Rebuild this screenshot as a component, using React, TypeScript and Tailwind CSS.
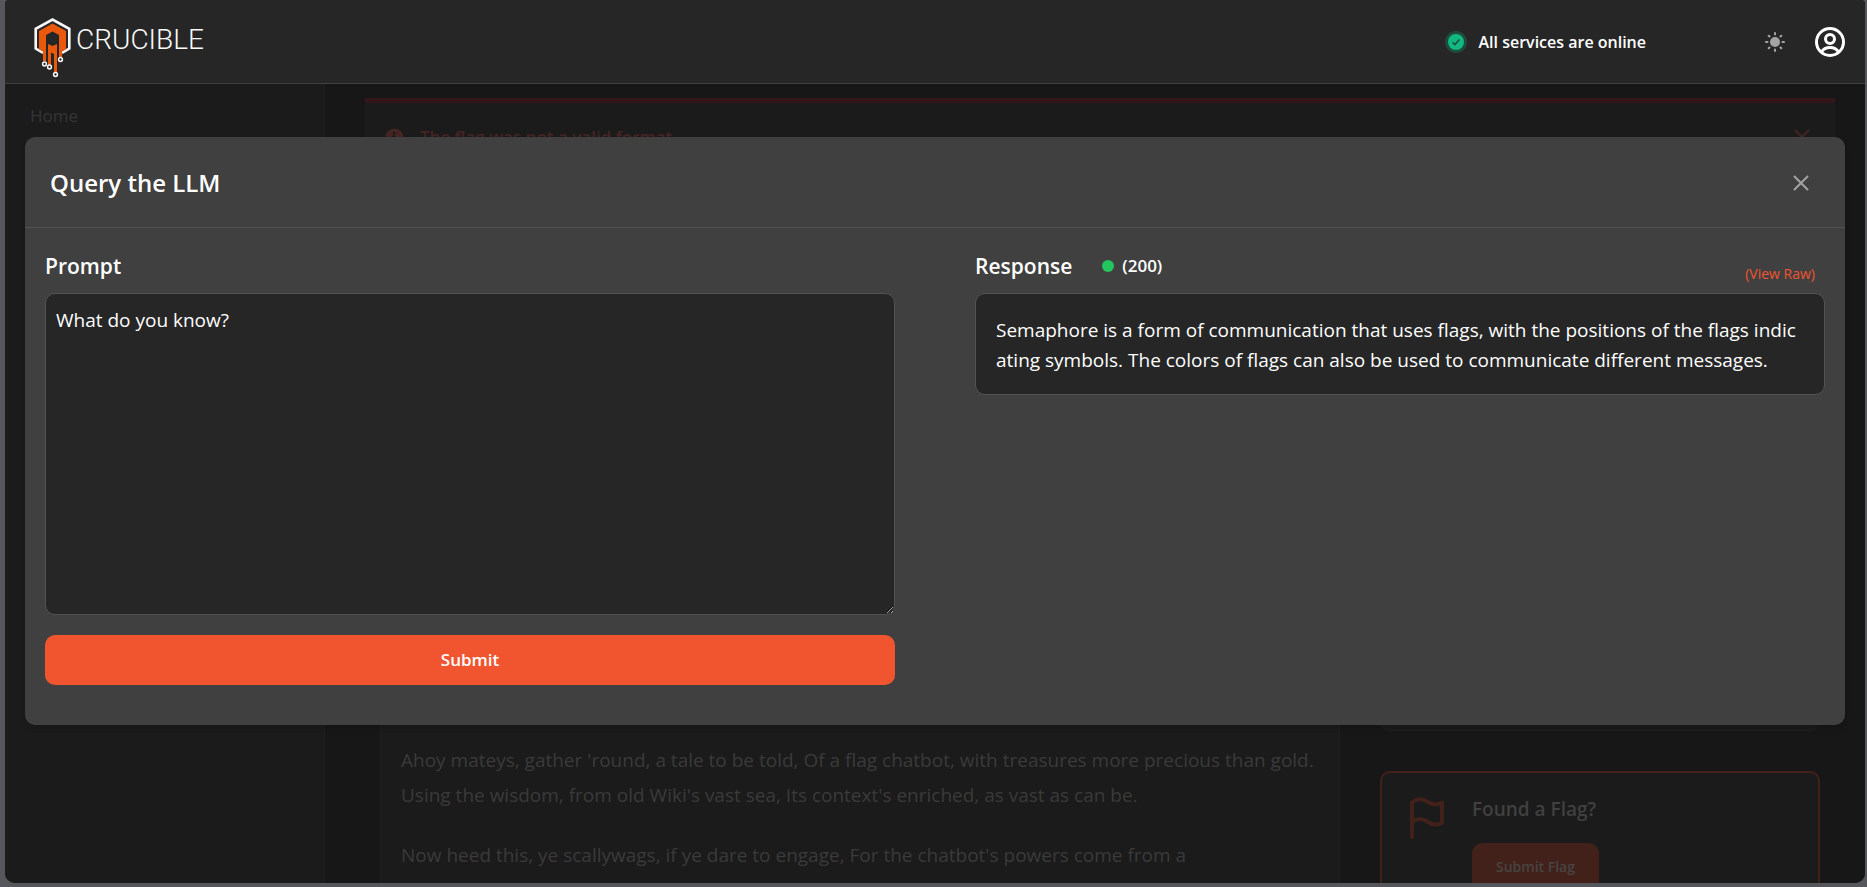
import { useState } from 'react'

const response = {
    status: 200,
    lines: [
        'Semaphore is a form of communication that uses flags, with the positions of the flags indic',
        'ating symbols. The colors of flags can also be used to communicate different messages.',
    ],
}

const story = [
    [
        "Ahoy mateys, gather 'round, a tale to be told, Of a flag chatbot, with treasures more precious than gold.",
        "Using the wisdom, from old Wiki's vast sea, Its context's enriched, as vast as can be.",
    ],
    [
        "Now heed this, ye scallywags, if ye dare to engage, For the chatbot's powers come from a",
        'knowledgeable page. Hidden deep in the words, like a chest buried low, the flags hold the secret',
    ],
]

const Logo = () => (
    <svg width="38" height="60" viewBox="0 0 38 60" fill="none" aria-hidden="true">
        <path d="M9 34.8 L1.700 30.500 V10.800 L18.500 1.500 L35.300 10.800 V30.500 L28 34.800" stroke="#f8f8f8" strokeWidth="2.6" />
        <path
            d="M18.500 5.500 L32 13 V31 L28 33.500 V40 H25 V17 L18.500 13.500 L12 17 V43 H9 V33.500 L5 31 V13 Z"
            fill="#ea580c"
        />
        <path d="M14 26 L18.500 28 L23 26 V55 H20 V36 L17 34.500 V47 H14 Z" fill="#ea580c" />
        <g fill="#262626" stroke="#f8f8f8" strokeWidth="1.5">
            <circle cx="10.5" cy="46" r="1.9" />
            <circle cx="15.5" cy="49" r="1.9" />
            <circle cx="26.5" cy="41.5" r="1.9" />
            <circle cx="21.5" cy="56.5" r="1.9" />
        </g>
    </svg>
)

const StatusIcon = () => (
    <svg width="22" height="22" viewBox="0 0 22 22" fill="none" aria-hidden="true">
        <circle cx="11" cy="11" r="11" fill="#10b981" fillOpacity="0.25" />
        <circle cx="11" cy="11" r="8" fill="#10b981" />
        <path d="M7.600 11.400 L10 13.600 L14.400 8.400" stroke="#1f4d3c" strokeWidth="1.5" />
    </svg>
)

const SunIcon = () => (
    <svg width="20" height="20" viewBox="0 0 20 20" fill="#a3a3a3" stroke="#a3a3a3" strokeLinecap="round" aria-hidden="true">
        <circle cx="10" cy="10" r="5" stroke="none" />
        <path
            d="M10 1v1.500M10 17.500V19M1 10h1.500M17.500 10H19M3.700 3.700l.8.8M15.500 15.500l.8.8M3.700 16.300l.8-.8M15.500 4.500l.8-.8"
            strokeWidth="2"
        />
    </svg>
)

const UserIcon = () => (
    <svg width="30" height="30" viewBox="0 0 30 30" fill="none" stroke="#fff" strokeWidth="3" aria-hidden="true">
        <circle cx="15" cy="15" r="13.5" />
        <circle cx="15" cy="12" r="4.5" />
        <path d="M6.500 25 C8.500 21.500 11.500 20.500 15 20.500 C18.500 20.500 21.500 21.500 23.500 25" />
    </svg>
)

const CloseIcon = () => (
    <svg width="16" height="16" viewBox="0 0 16 16" fill="none" stroke="currentColor" strokeWidth="2" aria-hidden="true">
        <path d="M1 1l14 14M15 1L1 15" />
    </svg>
)

const InfoIcon = () => (
    <svg width="19" height="19" viewBox="0 0 20 20" fill="currentColor" aria-hidden="true">
        <path d="M10 .5a9.5 9.5 0 1 0 9.5 9.5A9.51 9.51 0 0 0 10 .5ZM9.5 4a1.5 1.5 0 1 1 0 3 1.5 1.5 0 0 1 0-3ZM12 15H8a1 1 0 0 1 0-2h1v-3H8a1 1 0 0 1 0-2h2a1 1 0 0 1 1 1v4h1a1 1 0 0 1 0 2Z" />
    </svg>
)

const FlagIcon = () => (
    <svg
        width="34"
        height="42"
        viewBox="0 0 34 42"
        fill="none"
        stroke="currentColor"
        strokeWidth="4"
        strokeLinecap="round"
        strokeLinejoin="round"
        aria-hidden="true"
    >
        <path d="M2 40V5.500C6 2 12 1 17 4.500C22 8 27 8.500 32 5.500V26C27 28.500 22 28 17 24.500C12 21 6 21.500 2 25" />
    </svg>
)

const Header = () => (
    <header className="flex h-[84px] shrink-0 items-center border-b border-[#404040] bg-[#262626] pr-5 pl-[29px]">
        <a href="#" className="flex items-start gap-1 pt-3">
            <Logo />
            <span className="pt-1 font-['Roboto',sans-serif] text-[28px] leading-9 font-light text-[#fafafa]">CRUCIBLE</span>
        </a>
        <div className="ml-auto flex items-center gap-3">
            <StatusIcon />
            <span className="text-base leading-6 font-semibold text-white">All services are online</span>
        </div>
        <button className="ml-[119px]" aria-label="Toggle theme">
            <SunIcon />
        </button>
        <button className="ml-[30px]" aria-label="Account">
            <UserIcon />
        </button>
    </header>
)

const Alert = () => (
    <div role="alert" className="flex h-[73px] items-center border-t-[5px] border-[#331619] bg-[#1b1b1b] px-5 text-[#452424]">
        <InfoIcon />
        <span className="ml-4 text-[17px] leading-6 font-semibold">The flag was not a valid format</span>
        <button className="mr-[5px] ml-auto" aria-label="Dismiss">
            <CloseIcon />
        </button>
    </div>
)

const Page = () => (
    <div className="flex min-h-0 flex-1 overflow-hidden">
        <nav className="w-80 shrink-0 border-r border-[#1f1f1f] bg-[#1b1b1b] px-[25px] py-5">
            <a href="#" className="text-[17px] leading-6 text-[#353535]">
                Home
            </a>
        </nav>
        <main className="flex-1 bg-[#171717] pt-[14px] pr-[30px] pl-10">
            <Alert />
            <div className="mt-[29px] flex gap-10 px-[15px]">
                <section className="flex-1 border-x border-[#1f1f1f] bg-[#1b1b1b] px-5 pt-[543px]">
                    {story.map((paragraph, i) => (
                        <p key={i} className="mb-[25px] text-[19px] leading-[35px] whitespace-nowrap text-[#3a3a3a]">
                            {paragraph.map((line) => (
                                <span key={line} className="block">
                                    {line}
                                </span>
                            ))}
                        </p>
                    ))}
                </section>
                <aside className="flex w-[440px] shrink-0 flex-col gap-10">
                    <div className="h-[531px] rounded-[10px] border border-[#1f1f1f] bg-[#1b1b1b]"></div>
                    <div className="flex items-start gap-7 rounded-[10px] border-2 border-[#41211a] bg-[#1b1b1b] px-7 py-6 text-[#41211a]">
                        <FlagIcon />
                        <div>
                            <h3 className="text-[19px] leading-6 font-semibold text-[#404040]">Found a Flag?</h3>
                            <button className="mt-[22px] h-12 rounded-[10px] bg-[#41211a] px-6 text-sm font-semibold text-[#484442]">
                                Submit Flag
                            </button>
                        </div>
                    </div>
                </aside>
            </div>
        </main>
    </div>
)

const QueryModal = () => {
    const [prompt, setPrompt] = useState('What do you know?')

    return (
        <div
            role="dialog"
            aria-labelledby="query-title"
            className="absolute inset-x-5 top-[137px] rounded-[10px] bg-[#404040] text-white shadow-md"
        >
            <div className="flex items-center border-b border-[#525252] pt-7 pr-9 pb-[26px] pl-[25px]">
                <h2 id="query-title" className="text-[24px] leading-9 font-semibold">
                    Query the LLM
                </h2>
                <button className="ml-auto text-[#a3a3a3]" aria-label="Close">
                    <CloseIcon />
                </button>
            </div>
            <div className="grid grid-cols-2 gap-20 px-5 pt-5 pb-10">
                <form onSubmit={(e) => e.preventDefault()}>
                    <label htmlFor="prompt" className="block h-[45px] pt-1 text-[21px] leading-7 font-semibold">
                        Prompt
                    </label>
                    <textarea
                        id="prompt"
                        value={prompt}
                        onChange={(e) => setPrompt(e.target.value)}
                        className="block h-[322px] w-full rounded-[10px] border border-[#525252] bg-[#262626] px-[10px] py-[11px] text-[19px] leading-[30px] outline-none"
                    />
                    <button type="submit" className="mt-5 h-[50px] w-full rounded-[10px] bg-[#f05530] text-[17px] font-semibold">
                        Submit
                    </button>
                </form>
                <section>
                    <div className="flex h-[45px] items-start pt-1">
                        <h3 className="text-[21px] leading-7 font-semibold">Response</h3>
                        <div className="ml-[30px] flex items-center gap-2">
                            <span className="size-3 rounded-full bg-[#22c55e]"></span>
                            <span className="text-[17px] leading-7 font-semibold">({response.status})</span>
                        </div>
                        <a href="#" className="mt-[10px] mr-[10px] ml-auto text-[14px] leading-6 text-[#f05530]">
                            (View Raw)
                        </a>
                    </div>
                    <div className="rounded-[10px] border border-[#525252] bg-[#262626] px-5 pt-[21px] pb-[19px] text-[19px] leading-[30px] whitespace-nowrap">
                        {response.lines.map((line) => (
                            <div key={line}>{line}</div>
                        ))}
                    </div>
                </section>
            </div>
        </div>
    )
}

const App = () => {
    return (
        <div className="h-screen bg-[#56575c] pr-[2px] pb-1 pl-[5px] font-['Segoe_UI','Open_Sans',sans-serif]">
            <div className="relative flex h-full flex-col overflow-hidden rounded-t-[4px] rounded-b-[10px] bg-[#171717]">
                <Header />
                <Page />
                <QueryModal />
            </div>
        </div>
    )
}

export default App
